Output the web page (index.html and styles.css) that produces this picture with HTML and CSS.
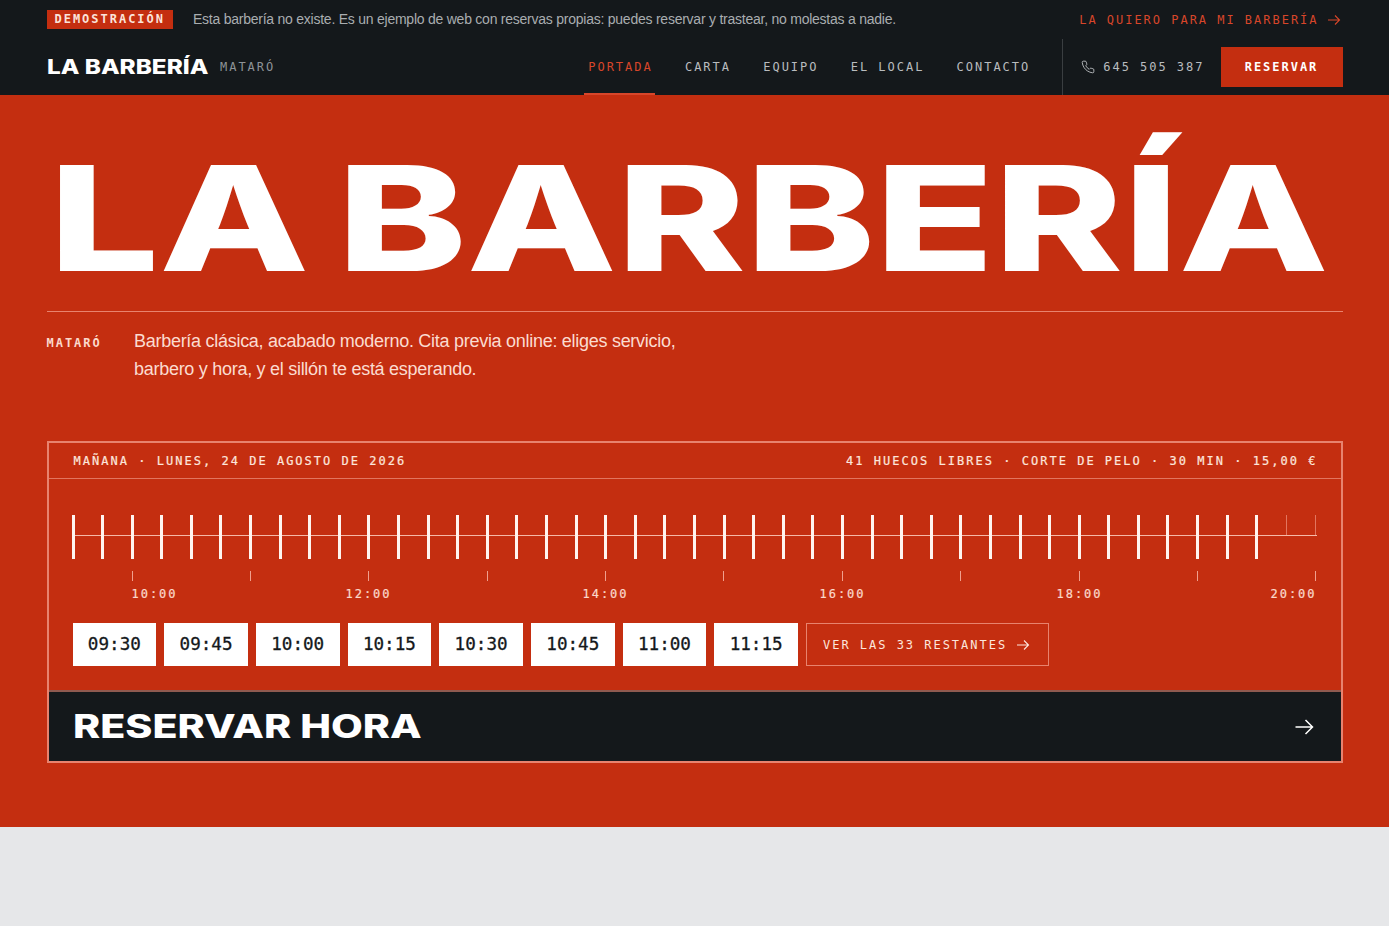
FILE: index.html
```html
<!DOCTYPE html>
<html lang="es">
<head>
    <meta charset="UTF-8">
    <meta name="viewport" content="width=device-width, initial-scale=1.0">
    <title>La Barbería · Mataró</title>
    <link rel="stylesheet" href="styles.css">
</head>
<body>
    <div class="demo-bar">
        <div class="demo-left">
            <span class="demo-badge">DEMOSTRACIÓN</span>
            <span class="demo-text">Esta barbería no existe. Es un ejemplo de web con reservas propias: puedes reservar y trastear, no molestas a nadie.</span>
        </div>
        <a class="demo-link" href="#">LA QUIERO PARA MI BARBERÍA
            <svg class="icon-small" viewBox="0 0 14 14"><path d="M1 7h11.5M8 2.5 12.5 7 8 11.5"/></svg>
        </a>
    </div>

    <header class="site-header">
        <a class="logo" href="#"><span class="logo-name">LA BARBERÍA</span><span class="logo-town">MATARÓ</span></a>
        <nav class="main-nav">
            <a class="nav-link active" href="#">PORTADA</a>
            <a class="nav-link" href="#">CARTA</a>
            <a class="nav-link" href="#">EQUIPO</a>
            <a class="nav-link" href="#">EL LOCAL</a>
            <a class="nav-link" href="#">CONTACTO</a>
        </nav>
        <div class="header-actions">
            <a class="phone" href="#">
                <svg class="icon-phone" viewBox="0 0 24 24"><path d="M22 16.92v3a2 2 0 0 1-2.18 2 19.8 19.8 0 0 1-8.63-3.07 19.5 19.5 0 0 1-6-6 19.8 19.8 0 0 1-3.07-8.67A2 2 0 0 1 4.11 2h3a2 2 0 0 1 2 1.72c.13.96.36 1.9.7 2.81a2 2 0 0 1-.45 2.11L8.09 9.91a16 16 0 0 0 6 6l1.27-1.27a2 2 0 0 1 2.11-.45c.91.34 1.85.57 2.81.7A2 2 0 0 1 22 16.92z"/></svg>
                645 505 387
            </a>
            <a class="btn-reserve" href="#">RESERVAR</a>
        </div>
    </header>

    <section class="hero">
        <h1 class="hero-title"><span class="hero-title-text">LA BARBERÍA</span></h1>
        <div class="hero-intro">
            <span class="hero-town">MATARÓ</span>
            <p class="hero-text">Barbería clásica, acabado moderno. Cita previa online: eliges servicio,<br>barbero y hora, y el sillón te está esperando.</p>
        </div>

        <div class="booking">
            <div class="booking-head">
                <span>MAÑANA · LUNES, 24 DE AGOSTO DE 2026</span>
                <span>41 HUECOS LIBRES · CORTE DE PELO · 30 MIN · 15,00 €</span>
            </div>
            <div class="booking-body">
                <div class="track">
                    <span class="tick"></span><span class="tick"></span><span class="tick"></span><span class="tick"></span><span class="tick"></span>
                    <span class="tick"></span><span class="tick"></span><span class="tick"></span><span class="tick"></span><span class="tick"></span>
                    <span class="tick"></span><span class="tick"></span><span class="tick"></span><span class="tick"></span><span class="tick"></span>
                    <span class="tick"></span><span class="tick"></span><span class="tick"></span><span class="tick"></span><span class="tick"></span>
                    <span class="tick"></span><span class="tick"></span><span class="tick"></span><span class="tick"></span><span class="tick"></span>
                    <span class="tick"></span><span class="tick"></span><span class="tick"></span><span class="tick"></span><span class="tick"></span>
                    <span class="tick"></span><span class="tick"></span><span class="tick"></span><span class="tick"></span><span class="tick"></span>
                    <span class="tick"></span><span class="tick"></span><span class="tick"></span><span class="tick"></span><span class="tick"></span>
                    <span class="tick"></span>
                    <span class="tick-off"></span><span class="tick-off"></span>
                </div>
                <div class="axis">
                    <span class="mark"></span><span class="mark"></span><span class="mark"></span><span class="mark"></span>
                    <span class="mark"></span><span class="mark"></span><span class="mark"></span><span class="mark"></span>
                    <span class="mark"></span><span class="mark"></span><span class="mark"></span>
                </div>
                <div class="axis-labels">
                    <span class="label-first">10:00</span>
                    <span>12:00</span>
                    <span>14:00</span>
                    <span>16:00</span>
                    <span>18:00</span>
                    <span class="label-last">20:00</span>
                </div>
                <div class="slots">
                    <a class="slot" href="#">09:30</a>
                    <a class="slot" href="#">09:45</a>
                    <a class="slot" href="#">10:00</a>
                    <a class="slot" href="#">10:15</a>
                    <a class="slot" href="#">10:30</a>
                    <a class="slot" href="#">10:45</a>
                    <a class="slot" href="#">11:00</a>
                    <a class="slot" href="#">11:15</a>
                    <a class="slot-more" href="#">VER LAS 33 RESTANTES
                        <svg class="icon-small" viewBox="0 0 14 14"><path d="M1 7h11.5M8 2.5 12.5 7 8 11.5"/></svg>
                    </a>
                </div>
            </div>
            <a class="booking-cta" href="#">
                <span class="cta-text">RESERVAR HORA</span>
                <svg class="icon-cta" viewBox="0 0 20 20"><path d="M1.500 10h17M11.500 3l7 7-7 7"/></svg>
            </a>
        </div>
    </section>

    <div class="page-rest"></div>
</body>
</html>
```

FILE: styles.css
```css
* {
    box-sizing: border-box;
}
body {
    margin: 0;
    background: #e6e7e9;
    font-family: "Liberation Sans", Arial, sans-serif;
    color: #fff;
}
a {
    color: inherit;
    text-decoration: none;
}
svg {
    fill: none;
    stroke: currentColor;
    flex: none;
}
.icon-small {
    width: 14px;
    height: 14px;
    stroke-width: 1.1;
}
.icon-phone {
    width: 14px;
    height: 14px;
    stroke-width: 1.6;
}
.icon-cta {
    width: 20px;
    height: 20px;
    stroke-width: 1.5;
}

/* demo bar */
.demo-bar {
    display: flex;
    justify-content: space-between;
    align-items: center;
    height: 39px;
    padding: 0 46.5px;
    background: #14181b;
}
.demo-left {
    display: flex;
    align-items: center;
    gap: 20px;
}
.demo-badge,
.demo-link,
.logo-town,
.nav-link,
.phone,
.btn-reserve,
.hero-town,
.booking-head,
.axis-labels,
.slot-more {
    font-family: "DejaVu Sans Mono", monospace;
    font-size: 12px;
    letter-spacing: 1.98px;
}
.demo-badge {
    padding: 0 8px;
    line-height: 19px;
    background: #c42e10;
    color: #fbe3da;
    font-weight: 700;
}
.demo-text {
    margin-top: -2px;
    font-size: 14px;
    letter-spacing: -0.24px;
    color: #a9adb0;
}
.demo-link {
    display: flex;
    align-items: center;
    gap: 8px;
    padding-right: 2px;
    color: #d8462a;
}

/* header */
.site-header {
    display: flex;
    align-items: center;
    height: 56px;
    padding: 0 46.5px;
    background: #14181b;
}
.logo {
    display: flex;
    align-items: center;
    margin-right: auto;
}
.logo-name {
    display: block;
    width: 173.500px;
    font-family: Inter, sans-serif;
    font-size: 20px;
    font-weight: 800;
    white-space: nowrap;
    transform: scaleX(1.215);
    transform-origin: left center;
}
.logo-town {
    color: #8e9397;
}
.main-nav {
    display: flex;
    gap: 26.25px;
    align-self: stretch;
}
.nav-link {
    display: flex;
    align-items: center;
    padding: 2px 2px 0 4px;
    border-bottom: 2px solid transparent;
    color: #b9bcbf;
}
.nav-link.active {
    color: #d8462a;
    border-bottom-color: #d8462a;
}
.header-actions {
    display: flex;
    align-items: center;
    gap: 16px;
    align-self: stretch;
    margin-left: 30px;
    padding-left: 18px;
    border-left: 1px solid #3a3e41;
}
.phone {
    display: flex;
    align-items: center;
    gap: 8px;
    color: #b9bcbf;
}
.btn-reserve {
    display: block;
    width: 122px;
    line-height: 40px;
    text-align: center;
    background: #c42e10;
    font-weight: 700;
}

/* hero */
.hero {
    height: 732px;
    padding: 0 46.5px;
    background: #c42e10;
}
.hero-title {
    margin: 0;
    padding-top: 50px;
    height: 217px;
    border-bottom: 1px solid #e8836e;
    font-family: Inter, sans-serif;
    font-size: 146px;
    line-height: 146px;
    font-weight: 800;
    word-spacing: -11px;
    white-space: nowrap;
}
.hero-title-text {
    display: inline-block;
    margin-left: 2px;
    transform: scaleX(1.335);
    transform-origin: left top;
}
.hero-intro {
    display: flex;
    padding-top: 15px;
}
.hero-town {
    width: 87.5px;
    padding-top: 9px;
    color: #fbd9cc;
    font-weight: 700;
}
.hero-text {
    margin: 0;
    font-size: 18px;
    line-height: 28px;
    letter-spacing: -0.28px;
    color: #fbdcd0;
}

/* booking box */
.booking {
    margin-top: 58px;
    border: 2px solid #e8836e;
}
.booking-head {
    display: flex;
    justify-content: space-between;
    align-items: center;
    height: 36px;
    padding: 0 23px 0 25px;
    border-bottom: 1px solid #e2755f;
    letter-spacing: 2.02px;
    color: #fde6dd;
    -webkit-text-stroke: 0.2px;
}
.booking-body {
    padding: 36px 24px 24px;
}
.track {
    position: relative;
    display: flex;
    justify-content: space-between;
    height: 44px;
    margin: 0 -1px;
}
.track::before {
    content: "";
    position: absolute;
    left: 0;
    right: 1px;
    top: 20px;
    height: 1px;
    background: #f6b9a8;
}
.tick,
.tick-off {
    position: relative;
    width: 3px;
}
.tick {
    background: #fff5f0;
}
.tick-off {
    height: 20px;
    background: linear-gradient(#e2755f, #e2755f) center / 1px 100% no-repeat;
}
.axis {
    display: flex;
    justify-content: space-between;
    height: 10px;
    margin-top: 12px;
    padding-left: 59px;
}
.mark {
    width: 1px;
    background: #f0a08e;
}
.axis-labels {
    display: grid;
    grid-template-columns: 1fr 2fr 2fr 2fr 2fr 1fr;
    margin-top: 6px;
    padding-left: 59px;
    line-height: 14px;
    color: #fbd9cc;
    text-align: center;
    -webkit-text-stroke: 0.2px;
}
.label-first {
    text-align: left;
}
.label-last {
    text-align: right;
}
.slots {
    display: flex;
    gap: 8px;
    margin-top: 22px;
}
.slot {
    display: block;
    width: 83.7px;
    line-height: 43px;
    text-align: center;
    background: #fff;
    color: #14181b;
    font-family: "DejaVu Sans Mono", monospace;
    font-size: 17.6px;
    -webkit-text-stroke: 0.3px;
}
.slot-more {
    display: flex;
    align-items: center;
    gap: 9px;
    padding: 0 18px 0 16px;
    border: 1px solid #e8836e;
    color: #fde6dd;
}
.booking-cta {
    display: flex;
    justify-content: space-between;
    align-items: center;
    height: 71px;
    padding: 0 27px 0 24px;
    background: #14181b;
    border-top: 2px solid #8f5a50;
}
.cta-text {
    display: block;
    font-family: Inter, sans-serif;
    font-size: 32px;
    font-weight: 800;
    white-space: nowrap;
    transform: scaleX(1.286);
    transform-origin: left center;
}
.page-rest {
    height: 99px;
}
```
